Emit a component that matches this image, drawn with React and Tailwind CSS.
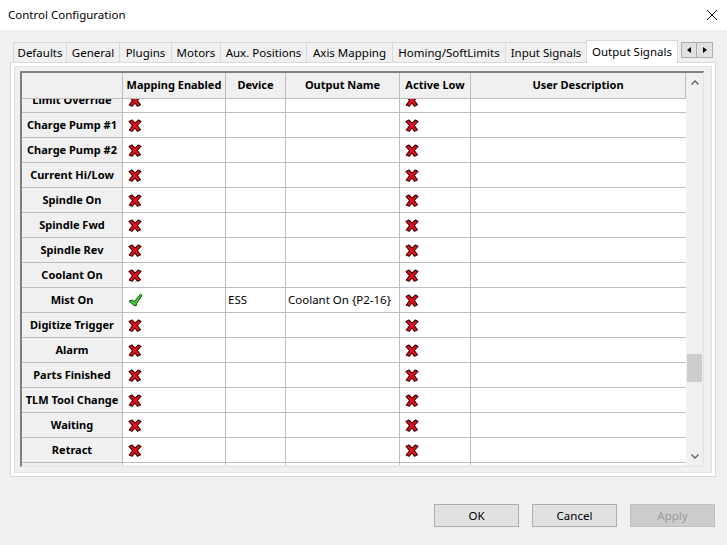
import React from "react";

const tabs = [
  { label: "Defaults", w: 54 },
  { label: "General", w: 54 },
  { label: "Plugins", w: 53 },
  { label: "Motors", w: 50 },
  { label: "Aux. Positions", w: 87 },
  { label: "Axis Mapping", w: 87 },
  { label: "Homing/SoftLimits", w: 114 },
  { label: "Input Signals", w: 82 },
];

const rows = [
  { name: "Limit Override" },
  { name: "Charge Pump #1" },
  { name: "Charge Pump #2" },
  { name: "Current Hi/Low" },
  { name: "Spindle On" },
  { name: "Spindle Fwd" },
  { name: "Spindle Rev" },
  { name: "Coolant On" },
  { name: "Mist On", enabled: true, device: "ESS", output: "Coolant On {P2-16}" },
  { name: "Digitize Trigger" },
  { name: "Alarm" },
  { name: "Parts Finished" },
  { name: "TLM Tool Change" },
  { name: "Waiting" },
  { name: "Retract" },
  { name: "" },
];

const RedX = () => (
  <svg width="14" height="13" viewBox="0 0 14 13">
    <path
      d="M1 2.5 L4 1 L7 4.2 L10.5 1 L13 2.5 L9.3 6.5 L12.5 10.8 L9.5 12.3 L7 9 L4 12.3 L1.2 11 L4.6 6.6 Z"
      fill="#e3101b"
      stroke="#3a0000"
      strokeWidth="1.1"
      strokeLinejoin="round"
    />
  </svg>
);

const GreenCheck = () => (
  <svg width="15" height="14" viewBox="0 0 15 14">
    <path
      d="M1 8 L4.5 7 L6.2 8.8 L12.5 1.2 L14 2.4 L8.6 10.4 L8 13 L5.8 12.2 Z"
      fill="#37d038"
      stroke="#0b4d0b"
      strokeWidth="1"
      strokeLinejoin="round"
    />
  </svg>
);

const cols = "grid grid-cols-[101px_103px_60px_114px_71px_215px]";

export default function App() {
  return (
    <div className="w-[727px] h-[545px] bg-[#f0f0f0] flex flex-col font-['Noto_Sans',sans-serif] text-[11.5px] text-black overflow-hidden">
      {/* title bar */}
      <div className="h-[30px] bg-white flex items-center justify-between pl-[8px] pr-[9px] shrink-0">
        <span className="text-[11.5px]">Control Configuration</span>
        <svg width="12" height="12" viewBox="0 0 12 12">
          <path d="M1 1 L11 11 M11 1 L1 11" stroke="#111" strokeWidth="1" />
        </svg>
      </div>

      <div className="pl-[10px] pr-[11px] pt-[10px] flex flex-col">
        {/* tabs */}
        <div className="flex items-end h-[22px] pl-[3px] relative z-10">
          {tabs.map((t) => (
            <div
              key={t.label}
              style={{ width: t.w }}
              className="h-[20px] bg-[#f0f0f0] border border-[#d9d9d9] border-b-0 -mr-px flex items-center justify-center whitespace-nowrap"
            >
              {t.label}
            </div>
          ))}
          <div className="w-[92px] h-[23px] bg-white border border-[#d9d9d9] border-b-0 -mb-px flex items-center justify-center whitespace-nowrap">
            Output Signals
          </div>
          <div className="flex ml-[3px] mb-[4px]">
            <div className="w-[16px] h-[16px] bg-[#e1e1e1] border border-[#adadad] flex items-center justify-center">
              <svg width="4" height="6" viewBox="0 0 4 6"><path d="M4 0 L0 3 L4 6 Z" fill="#000" /></svg>
            </div>
            <div className="w-[16px] h-[16px] bg-[#e1e1e1] border border-[#adadad] border-l-0 flex items-center justify-center">
              <svg width="4" height="6" viewBox="0 0 4 6"><path d="M0 0 L4 3 L0 6 Z" fill="#000" /></svg>
            </div>
          </div>
        </div>

        {/* tab panel */}
        <div className="w-[706px] h-[415px] border border-[#d9d9d9] bg-white p-[3px]">
          <div className="w-full h-full border border-[#e3e3e3] bg-[#f0f0f0] pl-[5px] pt-[4px] pr-[7px] pb-[6px]">
            <div className="h-[396px] border-l-2 border-t-2 border-[#7f7f7f] border-r border-b border-r-[#e3e3e3] border-b-[#e3e3e3] flex bg-[#f0f0f0]">
              <div className="w-[664px] flex flex-col">
                {/* header */}
                <div className={`${cols} h-[26px] font-bold text-[11px] shrink-0`}>
                  {["", "Mapping Enabled", "Device", "Output Name", "Active Low", "User Description"].map((h, i) => (
                    <div
                      key={i}
                      className="bg-[#f0f0f0] border-r border-b border-[#bdbdbd] flex items-center justify-center whitespace-nowrap"
                    >
                      {h}
                    </div>
                  ))}
                </div>
                {/* rows */}
                <div className="h-[366px] overflow-hidden">
                  <div className="-mt-[11px]">
                    {rows.map((r, i) => (
                      <div key={i} className={`${cols} h-[25px]`}>
                        <div className="bg-[#f0f0f0] border-r border-b border-[#bdbdbd] flex items-center justify-center font-bold text-[11px] whitespace-nowrap">
                          {r.name}
                        </div>
                        <div className="bg-white border-r border-b border-[#bdbdbd] flex items-center pl-[5px]">
                          {r.name && (r.enabled ? <GreenCheck /> : <RedX />)}
                        </div>
                        <div className="bg-white border-r border-b border-[#bdbdbd] flex items-center pl-[2px]">
                          {r.device}
                        </div>
                        <div className="bg-white border-r border-b border-[#bdbdbd] flex items-center pl-[2px] whitespace-nowrap">
                          {r.output}
                        </div>
                        <div className="bg-white border-r border-b border-[#bdbdbd] flex items-center pl-[5px]">
                          {r.name && <RedX />}
                        </div>
                        <div className="bg-white border-b border-[#bdbdbd]" />
                      </div>
                    ))}
                  </div>
                </div>
              </div>
              {/* scrollbar */}
              <div className="w-[17px] flex flex-col items-center bg-[#f0f0f0] py-[1px]">
                <div className="h-[17px] flex items-center justify-center">
                  <svg width="8" height="5" viewBox="0 0 8 5"><path d="M0.5 4.5 L4 1 L7.5 4.5" stroke="#606060" strokeWidth="1.4" fill="none" /></svg>
                </div>
                <div className="flex-1 w-full flex flex-col px-[1px]">
                  <div className="h-[263px]" />
                  <div className="h-[28px] w-full bg-[#cdcdcd]" />
                </div>
                <div className="h-[17px] flex items-center justify-center">
                  <svg width="8" height="5" viewBox="0 0 8 5"><path d="M0.5 0.5 L4 4 L7.5 0.5" stroke="#606060" strokeWidth="1.4" fill="none" /></svg>
                </div>
              </div>
            </div>
          </div>
        </div>

        {/* buttons */}
        <div className="flex justify-end gap-[13px] mt-[27px] pr-[1px]">
          <div className="w-[85px] h-[23px] bg-[#e1e1e1] border border-[#adadad] flex items-center justify-center">OK</div>
          <div className="w-[85px] h-[23px] bg-[#e1e1e1] border border-[#adadad] flex items-center justify-center">Cancel</div>
          <div className="w-[85px] h-[23px] bg-[#cccccc] border border-[#bfbfbf] flex items-center justify-center text-[#9a9a9a]">Apply</div>
        </div>
      </div>
    </div>
  );
}
